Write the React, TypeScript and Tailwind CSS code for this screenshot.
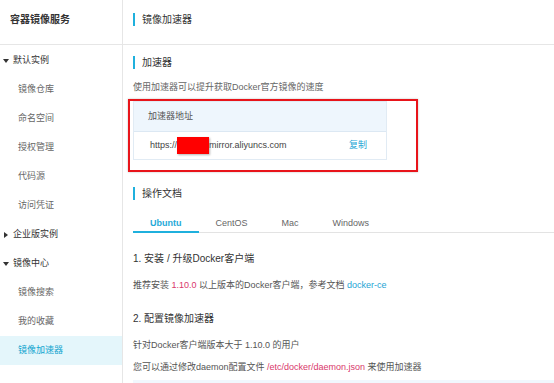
const groups = [
  { label: '默认实例', open: true, items: ['镜像仓库', '命名空间', '授权管理', '代码源', '访问凭证'] },
  { label: '企业版实例', open: false, items: [] },
  { label: '镜像中心', open: true, items: ['镜像搜索', '我的收藏', '镜像加速器'] },
];

const tabs = ['Ubuntu', 'CentOS', 'Mac', 'Windows'];

function Caret({ open }: { open: boolean }) {
  return open ? (
    <svg width="6" height="4" viewBox="0 0 6 4" className="mr-[4px]">
      <path d="M0 0h6L3 4z" fill="#333" />
    </svg>
  ) : (
    <svg width="4" height="6" viewBox="0 0 4 6" className="mr-[5px] ml-[1px]">
      <path d="M0 0v6l4-3z" fill="#333" />
    </svg>
  );
}

function SectionTitle({ children }: { children: React.ReactNode }) {
  return (
    <div className="flex h-[13px] items-center">
      <div className="h-[13px] w-[2px] bg-[#1fb0dd]" />
      <span className="ml-[7px] text-[10px] leading-[13px] text-[#333]">{children}</span>
    </div>
  );
}

export default function App() {
  const active = '镜像加速器';

  return (
    <div className="flex h-[383px] w-[554px] overflow-hidden bg-white font-['Liberation_Sans','Noto_Sans_CJK_SC',sans-serif]">
      <aside className="w-[123px] shrink-0 border-r border-[#e6e6e6]">
        <div className="h-[45px] border-b border-[#e6e6e6] pl-[10px] pt-[13px] text-[10px] font-bold leading-[14px] text-[#333]">
          容器镜像服务
        </div>
        <div className="pt-[1px]">
          {groups.map((g) => (
            <div key={g.label}>
              <div className="flex h-[29px] items-center pl-[3px] text-[9px] text-[#333]">
                <Caret open={g.open} />
                {g.label}
              </div>
              {g.items.map((it) => (
                <div
                  key={it}
                  className={`flex h-[29px] items-center pl-[18px] text-[9px] ${
                    it === active ? 'bg-[#e4f6fb] text-[#12a5cf]' : 'text-[#666]'
                  }`}
                >
                  {it}
                </div>
              ))}
            </div>
          ))}
        </div>
      </aside>

      <main className="flex min-w-0 flex-1 flex-col overflow-hidden">
        <div className="h-[45px] shrink-0 border-b border-[#e6e6e6] pl-[10px] pt-[13px]">
          <SectionTitle>镜像加速器</SectionTitle>
        </div>

        <div className="flex shrink-0 flex-col pl-[10px]">
          <div className="mt-[11px]">
            <SectionTitle>加速器</SectionTitle>
          </div>
          <p className="mt-[12px] text-[9px] leading-[12px] text-[#666]">
            使用加速器可以提升获取Docker官方镜像的速度
          </p>

          <div className="-ml-[5px] mt-[6px] w-[290px] border-2 border-[#e8141a] pb-[10px] pl-[3px] shadow-[0_0_2px_rgba(0,0,0,0.25)]">
            <div className="w-[254px] border border-[#e1ebf4]">
              <div className="flex h-[30px] items-center border-b border-[#dce8f3] bg-[#eef6fd] pl-[14px] text-[9px] text-[#555]">
                加速器地址
              </div>
              <div className="flex h-[27px] items-center justify-between pl-[16px] pr-[19px] text-[9px] text-[#444]">
                <span className="flex items-center">
                  https://
                  <span className="inline-block h-[17px] w-[32px] bg-[#ff0000] shadow-[1px_1px_2px_rgba(0,0,0,0.3)]" />
                  mirror.aliyuncs.com
                </span>
                <span className="text-[#2aa8d6]">复制</span>
              </div>
            </div>
          </div>

          <div className="mt-[15px]">
            <SectionTitle>操作文档</SectionTitle>
          </div>

          <div className="mt-[15px] flex border-b border-[#e3e3e3]">
            {tabs.map((t, i) => (
              <div
                key={t}
                className={`-mb-px flex h-[18px] items-start border-b-2 px-[17px] text-[9px] leading-[16px] ${
                  i === 0 ? 'border-[#1fb0dd] font-bold text-[#1fa9d8]' : 'border-transparent text-[#666]'
                }`}
              >
                {t}
              </div>
            ))}
          </div>

          <h3 className="mt-[19px] text-[10px] leading-[14px] text-[#333]">1. 安装 / 升级Docker客户端</h3>
          <p className="mt-[13px] text-[9px] leading-[12px] text-[#555]">
            推荐安装 <span className="text-[#d9376b]">1.10.0</span> 以上版本的Docker客户端，参考文档{' '}
            <span className="text-[#1ea4d4]">docker-ce</span>
          </p>

          <h3 className="mt-[21px] text-[10px] leading-[14px] text-[#333]">2. 配置镜像加速器</h3>
          <p className="mt-[13px] text-[9px] leading-[12px] text-[#555]">针对Docker客户端版本大于 1.10.0 的用户</p>
          <p className="mt-[10px] text-[9px] leading-[12px] text-[#555]">
            您可以通过修改daemon配置文件 <span className="text-[#d9376b]">/etc/docker/daemon.json</span> 来使用加速器
          </p>
          <div className="mt-[7px] h-[40px] bg-[#f1f7fd]" />
        </div>
      </main>
    </div>
  );
}
